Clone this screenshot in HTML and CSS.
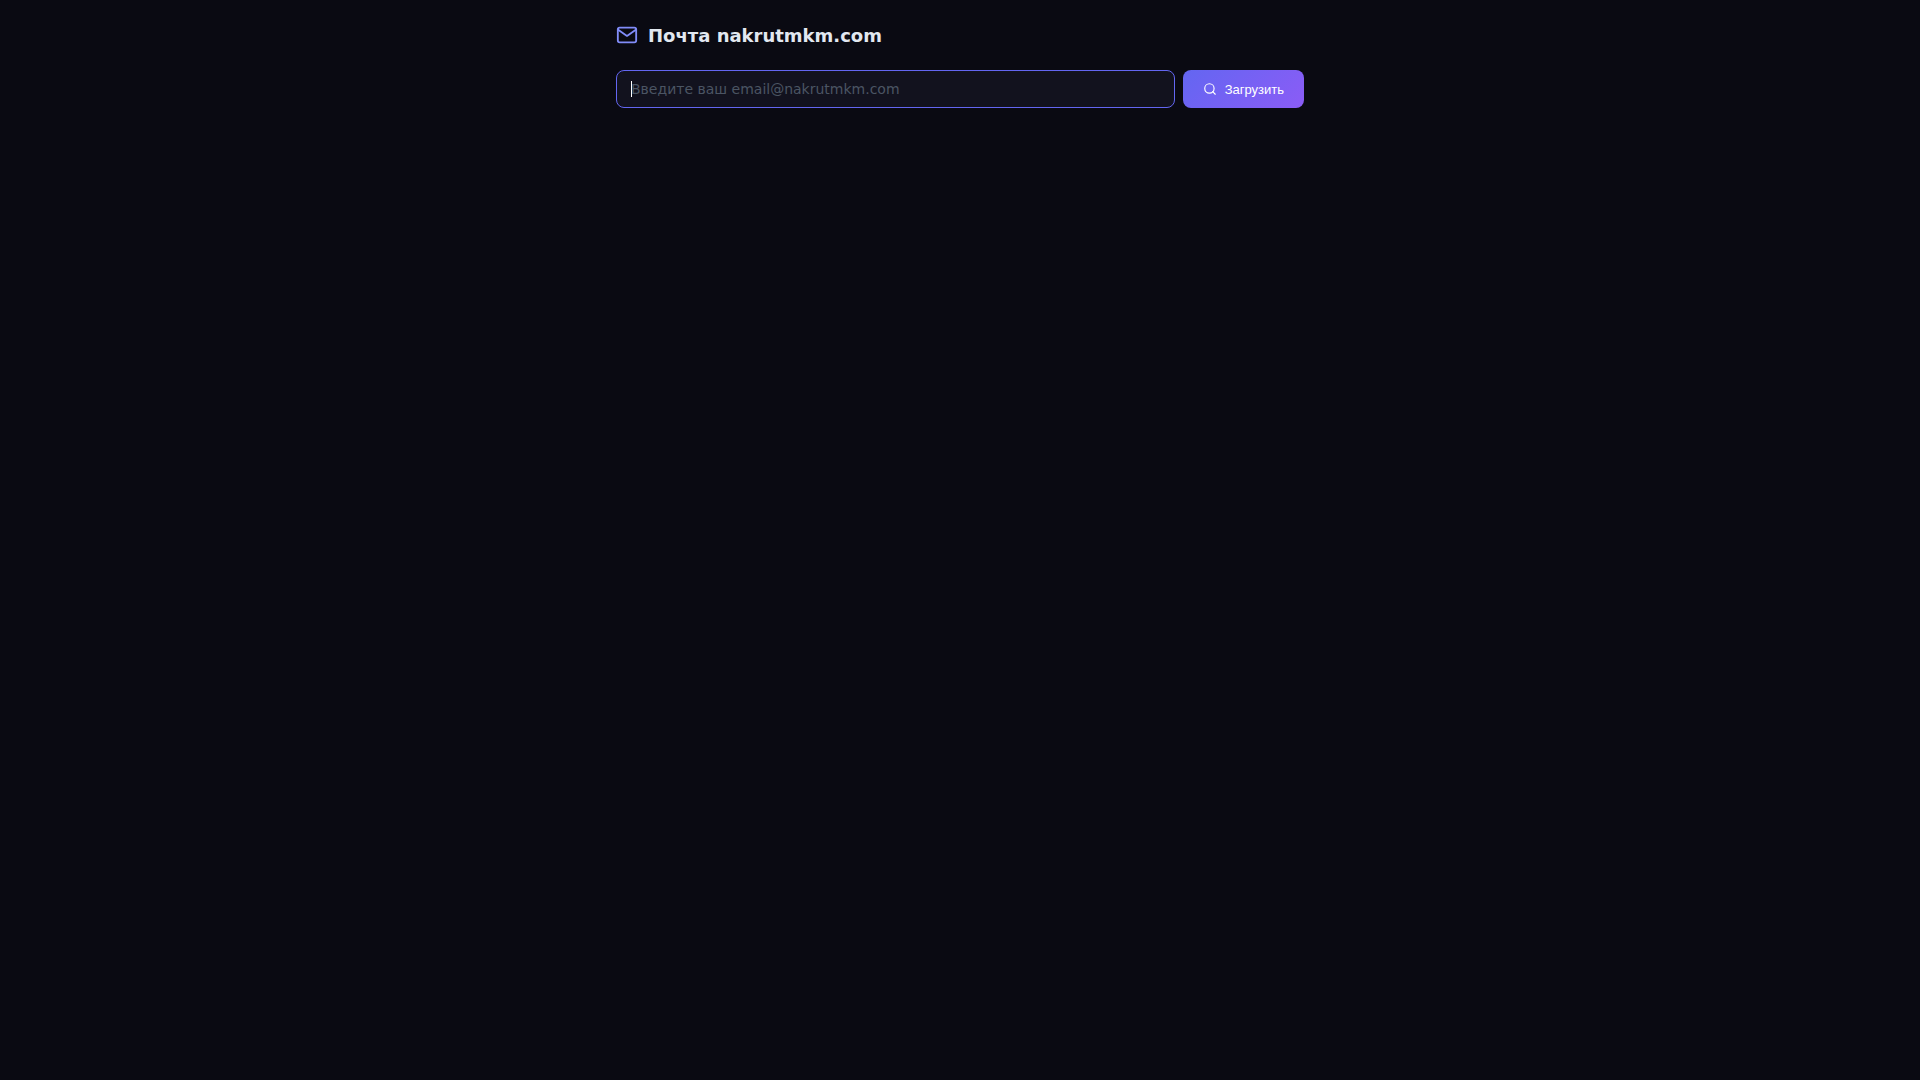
FILE: index.html
```html
<!DOCTYPE html>
<html lang="ru">
<head>
<meta charset="utf-8">
<meta name="viewport" content="width=device-width, initial-scale=1">
<title>Почта nakrutmkm.com</title>
<link rel="stylesheet" href="styles.css">
</head>
<body>
<main class="container">
  <h1 class="title">
    <svg class="title-icon" viewBox="0 0 24 24" aria-hidden="true"><path d="M4 4h16c1.1 0 2 .9 2 2v12c0 1.1-.9 2-2 2H4c-1.1 0-2-.9-2-2V6c0-1.1.9-2 2-2z"/><polyline points="22,6 12,13 2,6"/></svg>
    Почта nakrutmkm.com
  </h1>
  <form class="search">
    <div class="search-field">
      <input class="search-input" type="text" aria-label="Email" placeholder="Введите ваш email@nakrutmkm.com" autofocus>
    </div>
    <button class="search-button" type="button">
      <svg class="button-icon" viewBox="0 0 24 24" aria-hidden="true"><circle cx="11" cy="11" r="8"/><path d="M21 21l-4.35-4.35"/></svg>
      Загрузить
    </button>
  </form>
</main>
</body>
</html>
```
FILE: styles.css
```css
* {
  box-sizing: border-box;
  margin: 0;
  padding: 0;
}

body {
  min-height: 100vh;
  background: #0a0a12;
  color: #e2e8f0;
  font-family: "DejaVu Sans", sans-serif;
}

.container {
  max-width: 720px;
  margin: 0 auto;
  padding: 24px 16px;
}

.title {
  display: flex;
  align-items: center;
  gap: 10px;
  margin-bottom: 24px;
  font-size: 18px;
  line-height: normal;
  font-weight: 700;
}

.title-icon,
.button-icon {
  flex: none;
  fill: none;
  stroke: currentColor;
  stroke-width: 2;
  stroke-linecap: round;
  stroke-linejoin: round;
}

.title-icon {
  width: 22px;
  height: 22px;
  color: #818cf8;
}

.search {
  display: flex;
  gap: 8px;
}

.search-field {
  position: relative;
  display: flex;
  flex: 1;
  min-width: 0;
}

/* Steady text cursor over the start of the field */
.search-field:focus-within::after {
  content: "";
  position: absolute;
  top: 11px;
  left: 15px;
  width: 1px;
  height: 16px;
  background: #fff;
  pointer-events: none;
}

.search-input {
  flex: 1;
  min-width: 0;
  height: 38px;
  padding: 0 14px;
  border: 1px solid #6366f1;
  border-radius: 8px;
  outline: none;
  background: #12121e;
  color: #e2e8f0;
  caret-color: transparent;
  font-family: inherit;
  font-size: 14px;
}

.search-input::placeholder {
  color: #4b5563;
}

.search-button {
  display: flex;
  align-items: center;
  gap: 8px;
  padding: 0 20px;
  border: none;
  border-radius: 8px;
  background: linear-gradient(135deg, #6366f1, #8b5cf6);
  color: #fff;
  font-family: "Liberation Sans", Arial, sans-serif;
  font-size: 13px;
  cursor: pointer;
}

.button-icon {
  width: 14px;
  height: 14px;
}
```
